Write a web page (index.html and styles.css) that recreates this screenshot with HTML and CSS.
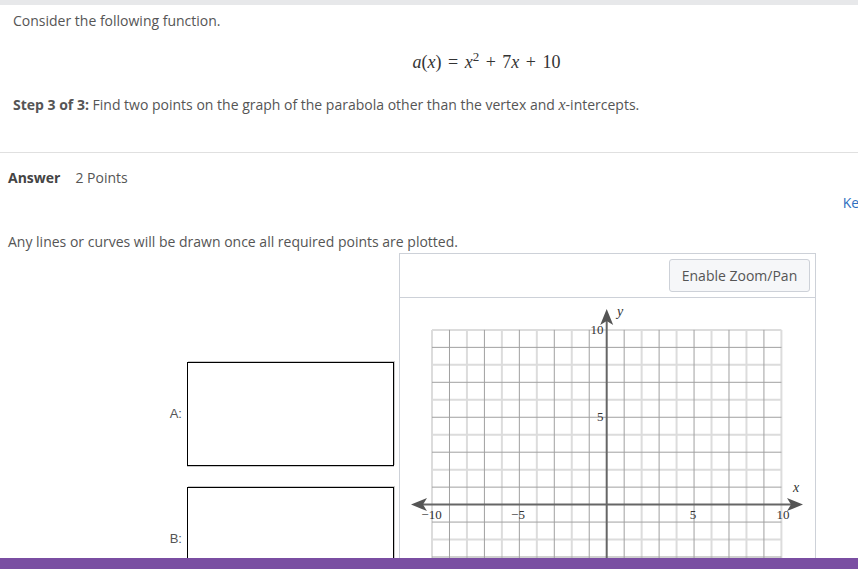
FILE: index.html
```html
<!DOCTYPE html>
<html lang="en">
<head>
    <meta charset="UTF-8">
    <meta name="viewport" content="width=device-width, initial-scale=1.0">
    <title>Step 3 of 3</title>
    <link rel="stylesheet" href="styles.css">
</head>
<body>
    <div class="topbar"></div>

    <div class="question">
        <p class="intro">Consider the following function.</p>
        <p class="formula"><i>a</i>(<i>x</i>) = <i>x</i><sup>2</sup> + 7<i>x</i> + 10</p>
        <p class="step"><b>Step 3 of 3:</b> Find two points on the graph of the parabola other than the vertex and <i class="math">x</i>-intercepts.</p>
    </div>

    <div class="divider"></div>

    <div class="answer-head">
        <span class="answer-title">Answer</span>
        <span class="points">2 Points</span>
    </div>

    <div class="keypad-row">
        <a class="keypad-link" href="#">Keypad</a>
    </div>

    <p class="note">Any lines or curves will be drawn once all required points are plotted.</p>

    <div class="work">
        <div class="inputs">
            <div class="point-row">
                <label class="point-label">A:</label>
                <div class="point-box"></div>
            </div>
            <div class="point-row">
                <label class="point-label">B:</label>
                <div class="point-box"></div>
            </div>
        </div>

        <div class="graph-panel">
            <div class="graph-head">
                <button class="zoom-btn">Enable Zoom/Pan</button>
            </div>
            <svg class="graph" width="415" height="320" viewBox="0 0 415 320">
                <!-- grid in graph units, 17.47px per unit, origin at (206.7, 206.6) -->
                <g transform="translate(206.7 206.6) scale(17.47)" fill="none">
                    <path stroke="#dcdcdc" stroke-width="2" vector-effect="non-scaling-stroke"
                        d="M-10 -10V10M-8 -10V10M-6 -10V10M-4 -10V10M-2 -10V10M2 -10V10M4 -10V10M6 -10V10M8 -10V10M10 -10V10
                           M-10 -10H10M-10 -8H10M-10 -6H10M-10 -4H10M-10 -2H10M-10 2H10M-10 4H10M-10 6H10M-10 8H10M-10 10H10"/>
                    <path stroke="#a0a0a0" stroke-width="1" vector-effect="non-scaling-stroke"
                        d="M-9 -10V10M-7 -10V10M-5 -10V10M-3 -10V10M-1 -10V10M1 -10V10M3 -10V10M5 -10V10M7 -10V10M9 -10V10
                           M-10 -9H10M-10 -7H10M-10 -5H10M-10 -3H10M-10 -1H10M-10 1H10M-10 3H10M-10 5H10M-10 7H10M-10 9H10"/>
                </g>
                <g stroke="#666" stroke-width="2">
                    <line x1="206.7" y1="20" x2="206.7" y2="320"/>
                    <line x1="20" y1="206.6" x2="394" y2="206.6"/>
                </g>
                <g fill="#555">
                    <polygon points="206.7,11 213.2,27 206.7,23 200.2,27"/>
                    <polygon points="11,206.6 27,200.1 23,206.6 27,213.1"/>
                    <polygon points="403,206.6 387,200.1 391,206.6 387,213.1"/>
                </g>
                <g class="axis-label">
                    <text x="203.5" y="36" text-anchor="end">10</text>
                    <text x="203.5" y="123" text-anchor="end">5</text>
                    <text x="31.5" y="221" text-anchor="middle">−10</text>
                    <text x="118" y="221" text-anchor="middle">−5</text>
                    <text x="293" y="221" text-anchor="middle">5</text>
                    <text x="383" y="221" text-anchor="middle">10</text>
                    <text class="axis-name" x="217" y="18">y</text>
                    <text class="axis-name" x="393" y="194">x</text>
                </g>
            </svg>
        </div>
    </div>

    <div class="footer-bar"></div>
</body>
</html>
```

FILE: styles.css
```css
body {
    margin: 0;
    height: 569px;
    overflow: hidden;
    font-family: "Open Sans", sans-serif;
    font-size: 14px;
    line-height: 20px;
    color: #555;
    background: #fff;
}

.topbar {
    height: 5px;
    background: #e7e8ea;
}

.question {
    padding: 6px 13px 0;
}

.question p {
    margin: 0;
}

.formula {
    margin-top: 19px !important;
    padding-left: 115px;
    text-align: center;
    font-family: "Liberation Serif", serif;
    font-size: 18px;
    line-height: 24px;
    color: #333;
    word-spacing: 2px;
}

.formula sup {
    font-size: 13px;
    line-height: 0;
}

.step {
    margin-top: 21px !important;
}

.step b {
    font-weight: 700;
}

.math {
    font-family: "Liberation Serif", serif;
    font-size: 16px;
}

.divider {
    margin-top: 37px;
    border-top: 1px solid #e0e0e0;
}

.answer-head {
    margin-top: 15px;
    padding-left: 8px;
    display: flex;
    gap: 15px;
}

.answer-title {
    font-weight: 700;
    color: #444;
}

.keypad-row {
    margin-top: 5px;
    display: flex;
    justify-content: flex-end;
}

.keypad-link {
    margin-right: -33px;
    color: #2f6fc0;
    text-decoration: none;
}

.note {
    margin: 19px 0 0;
    padding-left: 8px;
}

.work {
    display: flex;
    margin-top: 1px;
}

.inputs {
    width: 399px;
    box-sizing: border-box;
    padding: 109px 5px 0 0;
    display: flex;
    flex-direction: column;
    gap: 21px;
}

.point-row {
    display: flex;
    justify-content: flex-end;
    align-items: center;
    gap: 5px;
}

.point-label {
    font-family: "Liberation Sans", Arial, sans-serif;
    font-size: 13px;
    color: #555;
}

.point-box {
    width: 207px;
    height: 104px;
    box-sizing: border-box;
    border: 1px solid #000;
    box-shadow: 1px -1px 0 #c8c8c8, 0 1px 0 #c8c8c8;
    background: #fff;
}

.graph-panel {
    width: 417px;
    box-sizing: border-box;
    border: 1px solid #cdd1d8;
    border-bottom: none;
}

.graph-head {
    height: 44px;
    border-bottom: 1px solid #cdd1d8;
    display: flex;
    justify-content: flex-end;
    align-items: flex-start;
    padding: 5px 5px 0 0;
    box-sizing: border-box;
}

.zoom-btn {
    width: 141px;
    height: 33px;
    border: 1px solid #cdd1d8;
    border-radius: 3px;
    background: #f6f7f9;
    font-family: "Open Sans", sans-serif;
    font-size: 14px;
    color: #555;
    cursor: pointer;
}

.graph {
    display: block;
}

.axis-label text {
    font-family: "Liberation Serif", serif;
    font-size: 13px;
    fill: #333;
}

.axis-label .axis-name {
    font-style: italic;
    font-size: 14px;
}

.footer-bar {
    position: fixed;
    left: 0;
    right: 0;
    bottom: 0;
    height: 11px;
    background: #7a4ea2;
}
```
